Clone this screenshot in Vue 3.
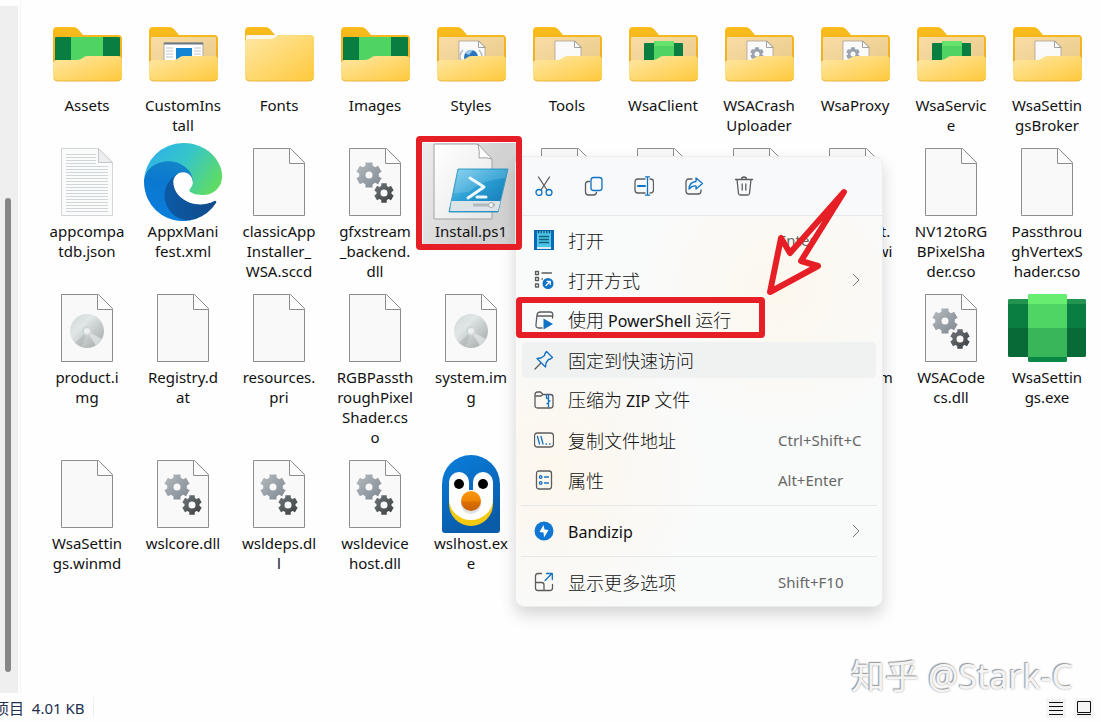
<template>
  <div class="explorer">
    <svg class="defs" width="0" height="0" aria-hidden="true">
      <defs>
        <linearGradient id="gFront" x1="0" y1="0" x2="1" y2="1">
          <stop offset="0" stop-color="#ffe8a6" />
          <stop offset="1" stop-color="#fec93c" />
        </linearGradient>
        <linearGradient id="gBack" x1="0" y1="0" x2="0" y2="1">
          <stop offset="0" stop-color="#fbbc1a" />
          <stop offset="1" stop-color="#e5a72c" />
        </linearGradient>
        <linearGradient id="gInner" x1="0" y1="0" x2="1" y2="1">
          <stop offset="0" stop-color="#f8dda6" />
          <stop offset="1" stop-color="#e9c98a" />
        </linearGradient>
        <linearGradient id="gGearLight" x1="0" y1="0" x2="1" y2="1">
          <stop offset="0" stop-color="#b4bbc0" />
          <stop offset="1" stop-color="#7f8890" />
        </linearGradient>
        <linearGradient id="gGearDark" x1="0" y1="0" x2="1" y2="1">
          <stop offset="0" stop-color="#70777a" />
          <stop offset="1" stop-color="#3b3e40" />
        </linearGradient>
        <linearGradient id="gDisc" x1="0" y1="0" x2="1" y2="1">
          <stop offset="0" stop-color="#d3d8d8" />
          <stop offset="0.35" stop-color="#dfe6e5" />
          <stop offset="0.6" stop-color="#c6cccc" />
          <stop offset="1" stop-color="#9fa5a5" />
        </linearGradient>
        <linearGradient id="gEdgeDark" x1="0" y1="0" x2="1" y2="0">
          <stop offset="0.1" stop-color="#0c59a4" />
          <stop offset="1" stop-color="#114a8b" />
        </linearGradient>
        <linearGradient id="gEdgeBlue" x1="0.5" y1="0" x2="0.3" y2="1">
          <stop offset="0" stop-color="#1486c8" />
          <stop offset="0.4" stop-color="#0b78d0" />
          <stop offset="1" stop-color="#0a7fdc" />
        </linearGradient>
        <linearGradient id="gEdgeGreen" x1="0" y1="0.3" x2="1" y2="0.75">
          <stop offset="0" stop-color="#2eb2ea" />
          <stop offset="0.45" stop-color="#36c6c9" />
          <stop offset="1" stop-color="#62dd5c" />
        </linearGradient>
        <linearGradient id="gShell" x1="0" y1="0" x2="1" y2="1">
          <stop offset="0" stop-color="#7fd2ee" />
          <stop offset="0.45" stop-color="#2ba0d4" />
          <stop offset="1" stop-color="#0e6fae" />
        </linearGradient>
        <linearGradient id="gPage" x1="0" y1="0" x2="1" y2="1">
          <stop offset="0" stop-color="#ffffff" />
          <stop offset="1" stop-color="#e6e6e6" />
        </linearGradient>
        <linearGradient id="gPenguin" x1="0" y1="0" x2="0.4" y2="1">
          <stop offset="0" stop-color="#0a7fdd" />
          <stop offset="1" stop-color="#0a5ba8" />
        </linearGradient>
        <linearGradient id="gBeak" x1="0" y1="0" x2="0" y2="1">
          <stop offset="0" stop-color="#fb9a0c" />
          <stop offset="0.5" stop-color="#ef8408" />
          <stop offset="0.55" stop-color="#dc7004" />
          <stop offset="1" stop-color="#c86003" />
        </linearGradient>
      </defs>
    </svg>

    <div class="body">
      <div class="nav-edge">
        <div class="thumb"></div>
      </div>

      <main class="files">
        <button
          v-for="(file, i) in files"
          :key="i"
          type="button"
          class="file"
          :class="{ selected: file.selected }"
        >
          <svg class="file-icon" viewBox="0 0 78 78" aria-hidden="true">
            <template v-if="file.icon === 'folder'">
              <path d="M5 14q0-4 4-4h16q3 0 5 2l5 6h35q4 0 4 4v36H5z" fill="url(#gBack)" />
              <template v-if="file.inside">
                <rect x="7" y="20" width="65" height="30" rx="1" fill="url(#gInner)" />
                <g v-if="file.inside === 'green'">
                  <rect x="7" y="20" width="65" height="30" rx="1" fill="#0a7d40" />
                  <rect x="23" y="20" width="32" height="30" fill="#4fd362" />
                </g>
                <g v-else-if="file.inside === 'subsystem'">
                  <rect x="20" y="26" width="39" height="24" rx="1" fill="#0a7d40" />
                  <rect x="30" y="24" width="20" height="26" rx="1" fill="#4fd362" />
                  <path d="M31 24h18l1 5H30z" fill="#66e36d" />
                </g>
                <g v-else-if="file.inside === 'window'">
                  <rect x="20" y="26" width="39" height="24" fill="#fff" stroke="#a8a8a8" />
                  <path d="M20 26.500h39" stroke="#707880" stroke-width="2" />
                  <path d="M22 31h7M22 34h7M22 37h7M22 40h7M50 31h7M50 34h7M50 37h7" stroke="#c0c4c8" />
                  <rect x="32" y="31" width="16" height="12" fill="#1384d4" />
                </g>
                <g v-else>
                  <path d="M27 24h20l6 6v20H27z" fill="#fafafa" stroke="#a9a296" stroke-width="0.8" />
                  <path d="M46.500 24v6.500H53z" fill="#fff" stroke="#8a8a8a" stroke-width="0.8" />
                  <path v-if="file.inside === 'gear'" :d="folderGear" fill="#98a3ad" fill-rule="evenodd" />
                  <g v-if="file.inside === 'style'">
                    <circle cx="39" cy="40" r="7" fill="#2c74bb" />
                    <path d="M33 36q3-4 8-3l-4 5z" fill="#9cc6ea" />
                    <path d="M31 33q-5 6-2 10M47 33q5 6 2 10" fill="none" stroke="#b4bcc2" stroke-width="1.500" />
                  </g>
                </g>
                <path d="M5 47q0-4 4-4h19q3 0 5-1l3-2q1-1 4-1h30q4 0 4 4v17q0 4-4 4H9q-4 0-4-4z" fill="url(#gFront)" />
              </template>
              <template v-else>
                <path d="M6 20q0-2 2-2h30v6H6z" fill="#fff8ea" />
                <path d="M5 25q0-3 4-3h20q3 0 5-1l3-2q2-1 4-1h29q4 0 4 4v38q0 4-4 4H9q-4 0-4-4z" fill="url(#gFront)" />
              </template>
              <path d="M6 62q1 2 4 2h59q3 0 4-2" fill="none" stroke="#e6b23c" />
            </template>

            <template v-else-if="file.icon === 'text'">
              <path d="M13.500 5.500h37l14 14v53h-51z" fill="#fafbfb" stroke="#d3d6d8" />
              <path :d="textLines" stroke="#d0d6d8" />
              <path d="M50.500 5.500v14h14z" fill="#eceeef" stroke="#c4c8ca" />
            </template>

            <g v-else-if="file.icon === 'edge'" transform="scale(0.305)">
              <path
                d="M231 190.500c-3.400 1.800-6.900 3.400-10.500 4.700a101 101 0 0 1-35.900 6.500c-47.300 0-88.500-32.500-88.500-74.300 0-11.400 6.400-21.900 16.400-27.300-42.800 1.800-53.800 46.400-53.800 72.500 0 73.900 68.100 81.400 82.800 81.400 7.900 0 19.800-2.300 27-4.600l1.300-.4a128.300 128.300 0 0 0 66.600-52.800 4 4 0 0 0-5.400-5.700z"
                fill="url(#gEdgeDark)"
              />
              <path
                d="M105.700 241.400a79.200 79.200 0 0 1-22.700-21.300 80.700 80.700 0 0 1 29.500-120c3.200-1.500 8.500-4.100 15.600-4a32.400 32.400 0 0 1 25.700 13 31.900 31.900 0 0 1 6.300 18.700c0-.2 24.500-79.600-80-79.600-43.900 0-80 41.700-80 78.200a130 130 0 0 0 11.900 56 128 128 0 0 0 156.500 67.100 75.500 75.500 0 0 1-62.800-8z"
                fill="url(#gEdgeBlue)"
              />
              <path
                d="M152.300 148.900c-.8 1-3.300 2.500-3.300 5.700 0 2.600 1.700 5.100 4.700 7.200 14.400 10 41.500 8.700 41.600 8.700a59.600 59.600 0 0 0 30.300-8.300 61.400 61.400 0 0 0 30.400-52.900c.3-22.400-8-37.300-11.300-43.900C223.500 23.900 177.700 0 128 0A128 128 0 0 0 0 126.200c.5-36.500 36.800-66 80-66 3.500 0 23.500.3 42 10.100 16.300 8.600 24.900 18.900 30.800 29.200 6.200 10.700 7.300 24.100 7.300 29.500 0 5.300-2.700 13.300-7.800 19.900z"
                fill="url(#gEdgeGreen)"
              />
            </g>

            <g v-else-if="file.icon === 'powershell'">
              <path d="M2 1h43l15 15v60H2z" fill="url(#gPage)" stroke="#a2a2a2" />
              <path d="M46 1q2 8 1 14 7-1 13 1z" fill="#fdfdfd" stroke="#a2a2a2" />
              <path d="M26 26h50l-10 43H17z" fill="url(#gShell)" stroke="#3d9cc4" stroke-linejoin="round" />
              <path d="M19.500 58h49L66 68H18z" fill="#dde4e8" />
              <path d="M27 27h48l-2 8q-24 2-36 14l-15 1z" fill="#fff" opacity="0.15" />
              <path d="M38 35l14 9-16 11M45 54h9" fill="none" stroke="#eef9ff" stroke-width="3" stroke-linecap="round" stroke-linejoin="round" />
              <path d="M41 62h22" stroke="#b1b9be" stroke-width="3" />
              <circle cx="59" cy="62" r="2.500" fill="#f4f4f4" stroke="#a1a9ad" />
            </g>

            <g v-else-if="file.icon === 'penguin'">
              <path d="M10 29a29 29 0 0 1 58 0v46q0 3-3 3H13q-3 0-3-3z" fill="url(#gPenguin)" />
              <path d="M17 46h44v3a22 22 0 0 1-44 0z" fill="#f5c812" />
              <path d="M17 27a10 10 0 0 1 20 0v8h4v-8a10 10 0 0 1 20 0v17a22 21 0 0 1-44 0z" fill="#fff" />
              <circle cx="27" cy="29" r="5" />
              <circle cx="51" cy="29" r="5" />
              <circle cx="39" cy="49" r="10" fill="#c9cdd2" opacity="0.6" />
              <circle cx="39" cy="46" r="10" fill="url(#gBeak)" />
            </g>

            <g v-else-if="file.icon === 'subsystem'">
              <rect y="10" width="78" height="58" rx="2" fill="#0a7d40" />
              <path d="M0 15v-3q0-2 2-2h74q2 0 2 2v3z" fill="#239350" />
              <path d="M0 39h78v27q0 2-2 2H2q-2 0-2-2z" fill="#086a37" />
              <rect x="20" y="5" width="39" height="68" rx="2" fill="#4fd564" />
              <path d="M20 15V7q0-2 2-2h35q2 0 2 2v8z" fill="#67ee70" />
              <path d="M20 39h39v32q0 2-2 2H22q-2 0-2-2z" fill="#38b659" />
              <path d="M20 68h39v3q0 2-2 2H22q-2 0-2-2z" fill="#0a8645" />
            </g>

            <template v-else>
              <path d="M13.500 5.500h37l14 14v53h-51z" fill="#f9f9f9" stroke="#8c8c8c" />
              <path d="M49.500 5.500v15h15" fill="#fdfdfd" stroke="#8c8c8c" />
              <template v-if="file.icon === 'gears'">
                <path :d="bigGear" fill="url(#gGearLight)" fill-rule="evenodd" />
                <path :d="smallGear" fill="url(#gGearDark)" fill-rule="evenodd" />
              </template>
              <template v-if="file.icon === 'disc'">
                <circle cx="39" cy="42" r="17" fill="url(#gDisc)" />
                <path d="M39 42L54 50l-6 7z" fill="#edf0f0" opacity="0.6" />
                <path d="M39 42L27 54l7 4z" fill="#aab0b0" opacity="0.5" />
                <circle cx="39" cy="42" r="5" fill="#d0d5d5" />
                <circle cx="39" cy="42" r="3" fill="#eef0f0" />
              </template>
            </template>
          </svg>
          <span class="file-name">{{ file.name }}</span>
        </button>
      </main>
    </div>

    <footer class="status">
      <span class="status-text">项目&nbsp; 4.01 KB</span>
      <div class="views">
        <button type="button" class="view" aria-label="详细信息">
          <svg viewBox="0 0 16 16"><path d="M1 2.500h14M1 6.500h14M1 10.500h14M1 14.500h14" stroke="#111" /></svg>
        </button>
        <button type="button" class="view" aria-label="大图标">
          <svg viewBox="0 0 16 16"><path d="M1.500 1.500h13v11h-13zM1 14.500h14" fill="none" stroke="#111" /></svg>
        </button>
      </div>
    </footer>

    <div class="menu" role="menu">
      <div class="tools">
        <button v-for="tool in tools" :key="tool.label" type="button" class="tool" :aria-label="tool.label">
          <svg viewBox="0 0 20 20">
            <path v-for="(p, i) in tool.paths" :key="i" v-bind="p" />
          </svg>
        </button>
      </div>
      <div v-for="(group, g) in menu" :key="g" class="group">
        <button
          v-for="item in group"
          :key="item.icon"
          type="button"
          role="menuitem"
          class="item"
          :class="{ active: item.active }"
        >
          <svg class="item-icon" viewBox="0 0 20 20" aria-hidden="true">
            <path v-for="(p, i) in icons[item.icon]" :key="i" v-bind="p" />
          </svg>
          <span class="item-label">{{ item.before }}<span v-if="item.latin" class="latin">{{ item.latin }}</span>{{ item.after }}</span>
          <span class="item-end">
            <svg v-if="item.sub" class="chevron" viewBox="0 0 12 12">
              <path d="M3 0l6 6-6 6" fill="none" stroke="#777" />
            </svg>
            <template v-else>{{ item.keys }}</template>
          </span>
        </button>
      </div>
    </div>

    <svg class="marks" viewBox="0 0 1101 722" aria-hidden="true">
      <rect x="419" y="139" width="100" height="108" rx="1" />
      <rect x="519" y="300" width="243" height="35" rx="1" />
      <path d="M844 192L790 253l-9-15-11 54 48-26-17-5z" />
    </svg>

    <div class="watermark">知乎 @Stark-C</div>
  </div>
</template>

<script setup>
const GREY = '#5c5c5c'
const BLUE = '#0f72c4'

const line = (d, stroke = GREY) => ({
  d,
  stroke,
  fill: 'none',
  'stroke-width': 1.3,
  'stroke-linecap': 'round',
  'stroke-linejoin': 'round'
})
const solid = (d, fill = BLUE) => ({ d, fill })

// gear with six teeth and a round hole
function gear(cx, cy, r, hole) {
  const inner = r * 0.76
  const pts = []
  for (let i = 0; i < 6; i++) {
    const a = (i * Math.PI) / 3 - Math.PI / 2
    const corners = [[-0.38, inner], [-0.27, r], [0.27, r], [0.38, inner]]
    for (const [da, rad] of corners) {
      pts.push(`${(cx + rad * Math.cos(a + da)).toFixed(2)} ${(cy + rad * Math.sin(a + da)).toFixed(2)}`)
    }
  }
  return `M${pts.join('L')}ZM${cx - hole} ${cy}a${hole} ${hole} 0 1 0 ${hole * 2} 0a${hole} ${hole} 0 1 0 ${-hole * 2} 0Z`
}

const bigGear = gear(33, 32, 13, 3.5)
const smallGear = gear(48, 50, 10, 3.5)
const folderGear = gear(37, 37, 7, 2.5)

const textLines = Array.from({ length: 20 }, (_, i) => {
  const y = 11.5 + i * 3
  return `M18 ${y}H${y < 22 ? 48 : 60}`
}).join('')

const files = [
  { name: 'Assets', icon: 'folder', inside: 'green' },
  { name: 'CustomIns\ntall', icon: 'folder', inside: 'window' },
  { name: 'Fonts', icon: 'folder' },
  { name: 'Images', icon: 'folder', inside: 'green' },
  { name: 'Styles', icon: 'folder', inside: 'style' },
  { name: 'Tools', icon: 'folder', inside: 'page' },
  { name: 'WsaClient', icon: 'folder', inside: 'subsystem' },
  { name: 'WSACrash\nUploader', icon: 'folder', inside: 'gear' },
  { name: 'WsaProxy', icon: 'folder', inside: 'gear' },
  { name: 'WsaServic\ne', icon: 'folder', inside: 'subsystem' },
  { name: 'WsaSettin\ngsBroker', icon: 'folder', inside: 'page' },
  { name: 'appcompa\ntdb.json', icon: 'text' },
  { name: 'AppxMani\nfest.xml', icon: 'edge' },
  { name: 'classicApp\nInstaller_\nWSA.sccd', icon: 'page' },
  { name: 'gfxstream\n_backend.\ndll', icon: 'gears' },
  { name: 'Install.ps1', icon: 'powershell', selected: true },
  { name: '', icon: 'page' },
  { name: '', icon: 'page' },
  { name: '', icon: 'page' },
  { name: 'Microsoft.\nUI.Xaml.wi', icon: 'page' },
  { name: 'NV12toRG\nBPixelSha\nder.cso', icon: 'page' },
  { name: 'Passthrou\nghVertexS\nhader.cso', icon: 'page' },
  { name: 'product.i\nmg', icon: 'disc' },
  { name: 'Registry.d\nat', icon: 'page' },
  { name: 'resources.\npri', icon: 'page' },
  { name: 'RGBPassth\nroughPixel\nShader.cs\no', icon: 'page' },
  { name: 'system.im\ng', icon: 'disc' },
  { name: '', icon: 'page' },
  { name: '', icon: 'page' },
  { name: '', icon: 'page' },
  { name: 'vm.system', icon: 'page' },
  { name: 'WSACode\ncs.dll', icon: 'gears' },
  { name: 'WsaSettin\ngs.exe', icon: 'subsystem' },
  { name: 'WsaSettin\ngs.winmd', icon: 'page' },
  { name: 'wslcore.dll', icon: 'gears' },
  { name: 'wsldeps.dl\nl', icon: 'gears' },
  { name: 'wsldevice\nhost.dll', icon: 'gears' },
  { name: 'wslhost.ex\ne', icon: 'penguin' }
]

const tools = [
  {
    label: '剪切',
    paths: [
      line('M4.500 1L13 14M15.500 1L7 14'),
      line('M8 16.500a3 3 0 1 1-6 0a3 3 0 1 1 6 0M18 16.500a3 3 0 1 1-6 0a3 3 0 1 1 6 0', BLUE)
    ]
  },
  {
    label: '复制',
    paths: [
      line('M5.500 5.500H4Q1.500 5.500 1.500 8v8q0 3 3 3h5q2.500 0 3-2.500'),
      line('M9.500 1.500h6q2.500 0 2.500 2.500v8q0 2.500-2.500 2.500h-6Q7 14.500 7 12V4q0-2.500 2.500-2.500z', BLUE)
    ]
  },
  {
    label: '重命名',
    paths: [
      line('M11 3H4Q1 3 1 6v8q0 3 3 3h7M16 3q3.500 0 3.500 3v8q0 3-3.500 3'),
      { ...line('M4 10h7', BLUE), 'stroke-width': 2 },
      line('M13.500 1v18M11.500 .8h4M11.500 19.200h4', BLUE)
    ]
  },
  {
    label: '共享',
    paths: [
      line('M8 3H5Q2 3 2 6v9q0 3 3 3h9q3 0 3-3v-1'),
      line('M12 2l6.500 5.500L12 13v-3q-4-.5-7 3 .5-7 7-7.500z', BLUE)
    ]
  },
  {
    label: '删除',
    paths: [line('M1.500 3.500h17M7.500 3.500a2.500 2.500 0 0 1 5 0M3 3.500l1.500 14q.2 1.500 2 1.500h7q1.800 0 2-1.500L17 3.500M8.200 8v6M11.800 8v6')]
  }
]

const icons = {
  notepad: [
    solid('M0 0h20v20H0z', '#0c68b4'),
    solid('M3 1h14v18H3z', '#4cc5e6'),
    solid('M3 17h14v2H3z', '#d6eef5'),
    line('M5.500 6.500h9M5.500 9.500h9M5.500 12.500h9', '#14607e'),
    line('M4.500 .8v2M7.200 .8v2M10 .8v2M12.800 .8v2M15.500 .8v2', '#0b4a70')
  ],
  openWith: [
    line('M1.500 1.500h3v3h-3zM1.500 7.500h3v3h-3zM1.500 14h3v3h-3zM8 3h9.500M8 9h.5'),
    solid('M19.500 13.500a5.500 5.500 0 1 1-11 0a5.500 5.500 0 1 1 11 0z'),
    line('M12 15.500l4-4M13 11.300h3.200v3.200', '#fff')
  ],
  run: [
    line('M8 18H5q-3.500 0-3-3.500L3 5q.5-3 3.500-3H16q3 0 2.800 3L18.500 8M2.800 6H18.500'),
    solid('M9.500 8.500v11l9.500-5.500z')
  ],
  pin: [
    line('M12.500 1.500l6 6-2 1.500-2 .5-2.500 3.500-.5 4-8.500-8.500 4-.5L10.500 5.500l.5-2z', BLUE),
    line('M6.500 13.500L1 19')
  ],
  zip: [
    line('M1 6V4.500Q1 2 3.500 2h3l2.500 2.500h7.500q2.500 0 2.500 2.500v8.500q0 2.500-2.500 2.500h-13Q1 18 1 15.500zM1 6h6l2-1.500'),
    line('M14.500 5v2M14.500 8.500H13M14.500 11H16M14.500 13.500H13M14.500 7v10', BLUE),
    line('M12.500 5v3', BLUE)
  ],
  path: [
    line('M3.500 3h13Q19.500 3 19.500 6v8q0 3-3 3h-13Q.5 17 .5 14V6q0-3 3-3z'),
    line('M3.500 6.500l2 7.500M7 6.500L9 14M12 14h.5M15.500 14h.5', BLUE)
  ],
  properties: [
    line('M5 1h10q2.500 0 2.500 2.500v13Q17.500 19 15 19H5q-2.500 0-2.500-2.500v-13Q2.500 1 5 1z'),
    line('M8 7a1.300 1.300 0 1 1-2.600 0a1.300 1.300 0 1 1 2.600 0M8 13a1.300 1.300 0 1 1-2.600 0a1.300 1.300 0 1 1 2.600 0M10.500 7h4M10.500 13h4', BLUE)
  ],
  bandizip: [
    solid('M19.500 10a9.500 9.500 0 1 1-19 0a9.500 9.500 0 1 1 19 0z', '#1177d4'),
    solid('M9.500 4L5.500 11l4 .5L10 16.500l4.500-7.500-4-.5z', '#fff')
  ],
  more: [
    line('M7.500 1.500H4Q1.500 1.500 1.500 4v12q0 2.500 2.500 2.500h12q2.500 0 2.500-2.500v-3.500M1.500 10.500h6Q10 10.500 10 13v5.500'),
    line('M11 8.500L18 1.500M12.500 1.500H18.300V7.500', BLUE)
  ]
}

const menu = [
  [
    { icon: 'notepad', before: '打开', keys: 'Enter' },
    { icon: 'openWith', before: '打开方式', sub: true },
    { icon: 'run', before: '使用 ', latin: 'PowerShell', after: ' 运行' },
    { icon: 'pin', before: '固定到快速访问', active: true },
    { icon: 'zip', before: '压缩为 ', latin: 'ZIP', after: ' 文件' },
    { icon: 'path', before: '复制文件地址', keys: 'Ctrl+Shift+C' },
    { icon: 'properties', before: '属性', keys: 'Alt+Enter' }
  ],
  [{ icon: 'bandizip', latin: 'Bandizip', sub: true }],
  [{ icon: 'more', before: '显示更多选项', keys: 'Shift+F10' }]
]
</script>

<style>
body {
  margin: 0;
  background: #fefefe;
}
</style>

<style scoped>
.explorer {
  position: relative;
  display: flex;
  flex-direction: column;
  min-height: 100vh;
  overflow: hidden;
  background: #fefefe;
  color: #111;
  font-family: "Noto Sans", "Noto Sans CJK SC", sans-serif;
}

.defs {
  position: absolute;
}

button {
  padding: 0;
  border: 0;
  background: none;
  color: inherit;
  font: inherit;
}

.body {
  display: flex;
  flex: 1;
}

.nav-edge {
  display: flex;
  flex-direction: column;
  width: 18px;
  margin-top: 6px;
  padding: 192px 0 21px;
  box-sizing: border-box;
  background: #efefef;
}

.thumb {
  flex: 1;
  width: 6px;
  margin-left: 5px;
  border-radius: 3px;
  background: #868686;
}

.files {
  display: grid;
  flex: 1;
  grid-template-columns: repeat(auto-fill, 96px);
  align-content: start;
  align-items: start;
  row-gap: 4px;
  margin-left: 2px;
  padding: 17px 0 0 18px;
  border-left: 1px solid #f5f5f5;
}

.file {
  display: flex;
  flex-direction: column;
  align-items: center;
  padding-bottom: 4px;
}

.file.selected {
  background: linear-gradient(110deg, #ececec, #d2d2d2 60%);
}

.file-icon {
  width: 78px;
  height: 78px;
}

.file-name {
  font-size: 15px;
  line-height: 20px;
  white-space: pre;
}

.status {
  display: flex;
  align-items: center;
  justify-content: space-between;
  height: 29px;
  padding-right: 7px;
  color: #22304f;
  font-size: 15px;
}

.status-text {
  margin-left: -6px;
  padding-right: 8px;
  border-right: 1px solid #f0f0f0;
}

.views {
  display: flex;
  gap: 8px;
}

.view {
  display: flex;
  align-items: center;
  justify-content: center;
  width: 20px;
  height: 20px;
  background: #f5f5f5;
}

.view svg {
  width: 16px;
  height: 16px;
}

.menu {
  position: absolute;
  top: 156px;
  left: 515px;
  width: 368px;
  box-sizing: border-box;
  border: 1px solid #ececec;
  border-radius: 9px;
  background:
    radial-gradient(circle at 10% 70%, #fdf7ed, transparent 34%),
    radial-gradient(circle at 72% 30%, #fdf8ee, transparent 34%),
    #f9fafa;
  box-shadow: 0 8px 16px rgba(0, 0, 0, 0.16);
}

.tools {
  display: flex;
  gap: 30px;
  padding: 19px 18px;
  border-radius: 9px 9px 0 0;
  background: #f7f9fa;
}

.tool {
  width: 20px;
  height: 20px;
}

.tool svg,
.item-icon {
  display: block;
  width: 20px;
  height: 20px;
}

.group {
  padding: 3px 0;
  border-top: 1px solid #e6e7e7;
}

.group:nth-child(2) {
  padding-top: 2px;
}

.group:last-child {
  padding-bottom: 2px;
}

.group:not(:nth-child(2)) {
  margin: 0 5px;
}

.group:not(:nth-child(2)) .item {
  width: calc(100% - 2px);
  margin-left: 1px;
}

.item {
  display: flex;
  align-items: center;
  width: calc(100% - 12px);
  height: 36px;
  margin: 4px 6px;
  padding-left: 12px;
  border-radius: 5px;
  text-align: left;
}

.item.active {
  background: #f0f1f1;
}

.item-label {
  flex: 1;
  margin-left: 14px;
  font-family: "Noto Sans CJK SC", sans-serif;
  font-size: 18px;
  font-weight: 300;
  line-height: 24px;
  white-space: pre;
}

.latin {
  font-family: "Noto Sans", sans-serif;
  font-size: 16px;
  font-weight: 400;
}

.item-end {
  width: 98px;
  color: #666;
  font-size: 15px;
}

.chevron {
  display: block;
  width: 12px;
  height: 12px;
  margin-left: 72px;
}

.marks {
  position: absolute;
  top: 0;
  left: 0;
  width: 1101px;
  height: 722px;
  fill: none;
  stroke: #e61f26;
  stroke-width: 6;
  stroke-linejoin: round;
  pointer-events: none;
}

.watermark {
  position: absolute;
  right: 28px;
  bottom: 22px;
  color: #f4f4f4;
  font-size: 34px;
  line-height: 48px;
  text-shadow: 0 0 2px #999, -1px -1px 1px #999;
  pointer-events: none;
}
</style>
